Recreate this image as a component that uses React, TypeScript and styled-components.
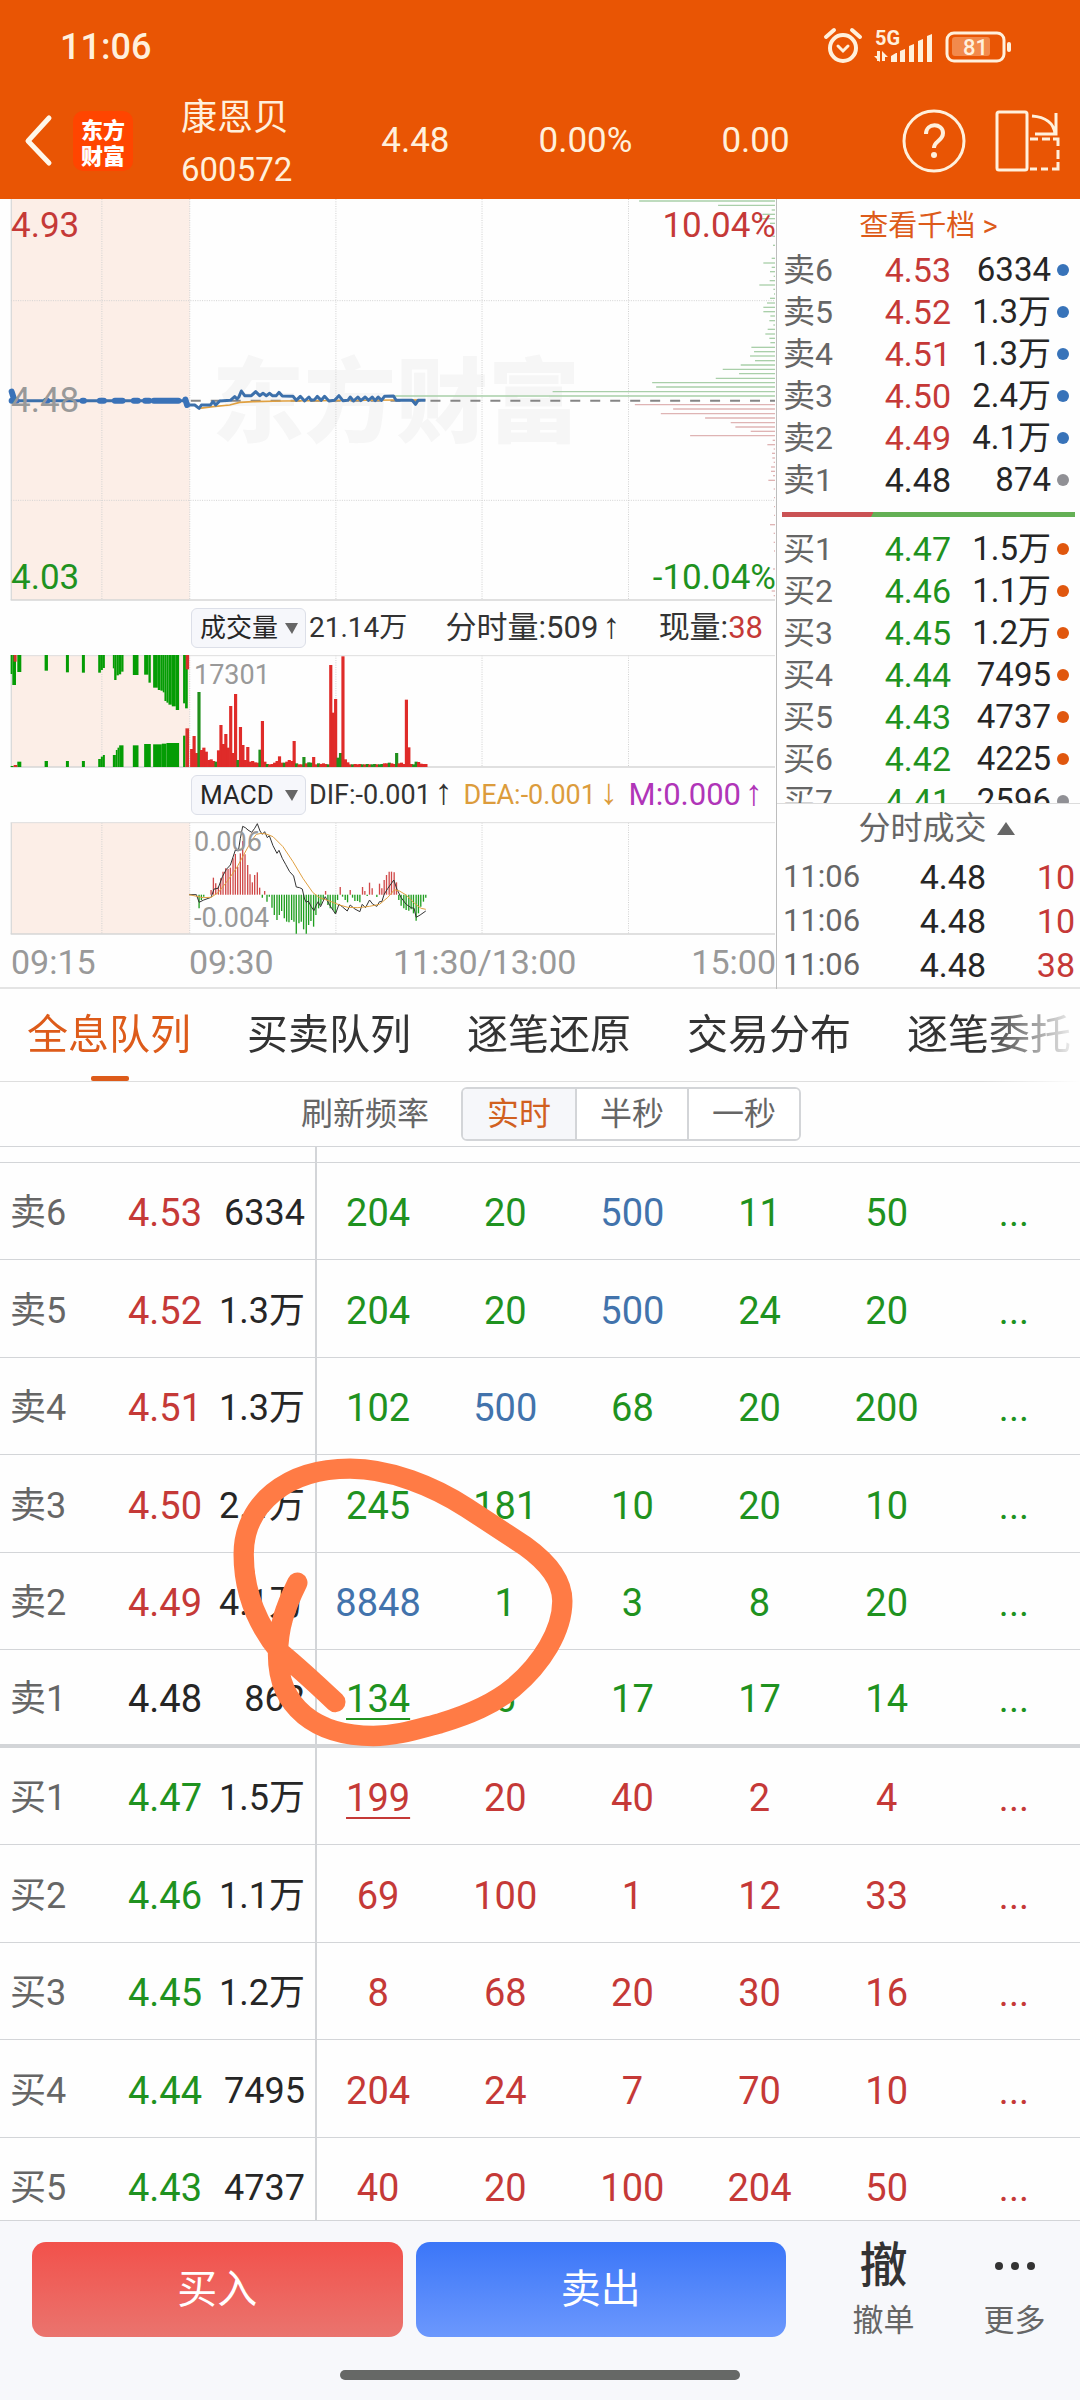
import React from 'react';
import styled, { createGlobalStyle } from 'styled-components';

const color = {
  brand: '#e95504',
  accent: '#dd5b1a',
  up: '#c53937',
  down: '#1f921f',
  big: '#4273ac',
  ink: '#262626',
  soft: '#666666',
  mute: '#999999',
  line: '#d3d5d8',
  cream: '#fff0dc',
};

const Global = createGlobalStyle`
  * { box-sizing: border-box; }
  body {
    margin: 0;
    background: #fff;
    color: ${color.ink};
    font-family: Roboto, 'Noto Sans CJK SC', sans-serif;
  }
  button, select, input {
    margin: 0;
    padding: 0;
    border: 0;
    background: none;
    color: inherit;
    font: inherit;
  }
`;

const Screen = styled.div`
  display: flex;
  flex-direction: column;
  height: 100vh;
  overflow: hidden;
  background: #fefefe;
`;

/* ---------- header ---------- */

const Header = styled.header`
  flex: none;
  background: ${color.brand};
  color: ${color.cream};
`;

const StatusBar = styled.div`
  display: flex;
  align-items: center;
  justify-content: space-between;
  height: 92px;
  padding: 2px 68px 0 60px;
`;

const Clock = styled.span`
  font-size: 36px;
  font-weight: 500;
  line-height: 40px;
`;

const NavBar = styled.nav`
  display: flex;
  align-items: center;
  height: 107px;
  padding: 0 20px 10px 24px;
`;

const IconButton = styled.button`
  display: flex;
  align-items: center;
`;

const Logo = styled.div`
  display: grid;
  place-content: center;
  width: 60px;
  height: 60px;
  margin: 0 48px 0 20px;
  border-radius: 10px;
  background: #ff4500;
  color: #fff;
  font-family: 'Noto Sans CJK SC', sans-serif;
  font-size: 22px;
  font-weight: 900;
  line-height: 26px;
`;

const Quote = styled.div`
  display: flex;
  align-items: center;
  gap: 89px;
  font-size: 35px;
`;

const Stock = styled.h1`
  display: flex;
  flex-direction: column;
  margin: 0;
  padding-top: 6px;
  font-size: 33px;
  font-weight: 400;
  line-height: 52px;
`;

const StockName = styled.span`
  font-size: 36px;
`;

const NavActions = styled.div`
  display: flex;
  gap: 28px;
  margin-left: auto;
`;

/* ---------- market panel ---------- */

const Market = styled.section`
  flex: none;
  display: grid;
  grid-template-columns: minmax(0, 1fr) 303px;
  height: 790px;
  border-bottom: 2px solid #e4e4e4;
`;

const Charts = styled.div`
  display: flex;
  flex-direction: column;
  border-right: 1px solid #bdbdbd;
`;

const ChartBox = styled.div<{ $h: number }>`
  position: relative;
  height: ${(p) => p.$h}px;
  svg {
    position: relative;
    display: block;
    width: 100%;
    height: 100%;
  }
`;

const Mark = styled.span<{ $tone: string; $size: number }>`
  position: absolute;
  color: ${(p) => p.$tone};
  font-size: ${(p) => p.$size}px;
  line-height: 40px;
`;

const TopLeft = styled(Mark)` left: 11px; top: 7px; `;
const MidLeft = styled(Mark)` left: 11px; top: 182px; `;
const LowLeft = styled(Mark)` left: 11px; bottom: 3px; `;
const TopRight = styled(Mark)` right: 0; top: 7px; `;
const LowRight = styled(Mark)` right: 0; bottom: 3px; `;
const InnerTop = styled(Mark)` left: 194px; top: 0; `;
const InnerLow = styled(Mark)` left: 194px; bottom: -3px; `;

const Watermark = styled.span`
  position: absolute;
  left: 212px;
  top: 136px;
  color: #f6f6f6;
  font-family: 'Noto Sans CJK SC', sans-serif;
  font-size: 92px;
  font-weight: 900;
  line-height: 120px;
`;

const Indicator = styled.div`
  display: flex;
  align-items: center;
  height: 54px;
  padding: 0 13px 0 191px;
  font-size: 30px;
`;

const Picker = styled.label`
  position: relative;
  flex: none;
  width: 115px;
  height: 40px;
  margin-right: 3px;
  border: 1px solid #dcdfe8;
  border-radius: 6px;
  background: #f6f7fb;
  select {
    appearance: none;
    width: 100%;
    height: 100%;
    padding-left: 8px;
    font-size: 26px;
    line-height: 38px;
  }
  svg {
    position: absolute;
    right: 7px;
    top: 14px;
    pointer-events: none;
  }
`;

const Readings = styled.div`
  flex: 1;
  display: flex;
  align-items: center;
  justify-content: space-between;
  color: #333;
  white-space: nowrap;
`;

const Reading = styled.span<{ $tone?: string; $size: number }>`
  color: ${(p) => p.$tone ?? 'inherit'};
  font-size: ${(p) => p.$size}px;
  line-height: 40px;
`;

const Arrow = styled.span`
  margin-left: 4px;
  font-family: 'Liberation Sans', sans-serif;
  font-size: 36px;
  line-height: 32px;
`;

const Red = styled.span`
  color: ${color.up};
`;

const TimeAxis = styled.div`
  display: grid;
  grid-template-columns: 178px 204px 1fr auto;
  padding-left: 11px;
  color: ${color.mute};
  font-size: 34px;
  line-height: 54px;
`;

/* ---------- order book ---------- */

const Book = styled.aside`
  display: flex;
  flex-direction: column;
  min-width: 0;
`;

const DepthLink = styled.a`
  display: block;
  height: 50px;
  color: ${color.accent};
  font-size: 29px;
  line-height: 54px;
  text-align: center;
  text-decoration: none;
`;

const Levels = styled.div`
  height: 555px;
  overflow: hidden;
  border-bottom: 1px solid #dcdcdc;
`;

const Level = styled.div`
  display: grid;
  grid-template-columns: 68px 100px 100px 1fr;
  align-items: center;
  height: 42px;
  padding-left: 6px;
  font-size: 33px;
  line-height: 42px;
  text-align: right;
`;

const LevelName = styled.span`
  color: ${color.soft};
  font-size: 32px;
  text-align: left;
`;

const Price = styled.span<{ $tone: string }>`
  color: ${(p) => p.$tone};
  font-size: 34px;
`;

const Dot = styled.i<{ $tone: string }>`
  width: 12px;
  height: 12px;
  margin-left: 6px;
  border-radius: 50%;
  background: ${(p) => p.$tone};
`;

const Balance = styled.div`
  display: flex;
  height: 5px;
  margin: 11px 5px 11px;
  background: linear-gradient(120deg, #ca5254 31%, #64b055 31%);
`;

const DealsTitle = styled.button`
  display: flex;
  align-items: center;
  justify-content: center;
  gap: 10px;
  height: 50px;
  padding: 0 0 2px 16px;
  color: ${color.soft};
  font-size: 32px;
  line-height: 48px;
`;

const Deal = styled.div`
  display: grid;
  grid-template-columns: 100px 103px 1fr;
  align-items: center;
  height: 44px;
  padding: 2px 5px 0 6px;
  font-size: 34px;
  line-height: 42px;
  text-align: right;
`;

const DealTime = styled.span`
  color: ${color.soft};
  font-size: 31px;
  text-align: left;
`;

/* ---------- tabs ---------- */

const Tabs = styled.div`
  flex: none;
  display: flex;
  height: 93px;
  overflow: hidden;
  border-bottom: 1px solid #dedede;
  mask-image: linear-gradient(90deg, #000 91%, transparent 100%);
`;

const Tab = styled.button<{ $on?: boolean }>`
  flex: none;
  position: relative;
  width: 220px;
  padding: 0 2px 0 0;
  color: ${(p) => (p.$on ? color.accent : '#333')};
  font-size: 41px;
  line-height: 60px;
  &::after {
    content: '';
    position: absolute;
    left: 50%;
    bottom: 0;
    width: 38px;
    height: 5px;
    margin-left: -19px;
    border-radius: 2px;
    background: ${(p) => (p.$on ? color.accent : 'transparent')};
  }
`;

const RateRow = styled.div`
  flex: none;
  display: flex;
  align-items: center;
  justify-content: center;
  gap: 32px;
  height: 65px;
  padding-left: 22px;
  border-bottom: 1px solid ${color.line};
  color: ${color.soft};
  font-size: 32px;
  line-height: 50px;
`;

const Segments = styled.div`
  display: flex;
  height: 54px;
  border: 2px solid ${color.line};
  border-radius: 6px;
  overflow: hidden;
`;

const Segment = styled.button<{ $on?: boolean }>`
  width: 112px;
  background: ${(p) => (p.$on ? '#f6f7fa' : '#fff')};
  color: ${(p) => (p.$on ? '#d1601f' : color.soft)};
  & + & {
    border-left: 2px solid ${color.line};
  }
`;

/* ---------- queue table ---------- */

const Queue = styled.section`
  position: relative;
  flex: 1;
  min-height: 0;
  overflow: hidden;
`;

const QueueTable = styled.table`
  width: 100%;
  border-collapse: separate;
  border-spacing: 0;
  table-layout: fixed;
  line-height: 44px;
`;

const Row = styled.tr<{ $heavy?: boolean }>`
  height: 97px;
  &:nth-child(even) { height: 98px; }
  td, th {
    padding: 4px 0 0;
    border-bottom: ${(p) => (p.$heavy ? 4 : 1)}px solid ${color.line};
  }
`;

const LeadRow = styled.tr`
  height: 16px;
  td {
    padding: 0;
    border-bottom: 1px solid ${color.line};
  }
`;

const NameCell = styled.th`
  color: ${color.soft};
  font-size: 36px;
  font-weight: 400;
  text-align: left;
  text-indent: 10px;
`;

const PriceCell = styled.td<{ $tone: string }>`
  color: ${(p) => p.$tone};
  font-size: 38px;
  text-align: right;
`;

const QtyCell = styled.td`
  font-size: 36px;
  text-align: right;
  && {
    padding-right: 10px;
    border-right: 2px solid ${color.line};
  }
`;

const OrderCell = styled.td<{ $tone: string }>`
  color: ${(p) => p.$tone};
  font-size: 38px;
  text-align: center;
  && {
    padding-right: 5px;
  }
`;

const Own = styled.span`
  text-decoration: underline;
  text-decoration-thickness: 2px;
  text-underline-offset: 6px;
`;

const Scribble = styled.svg`
  position: absolute;
  left: 200px;
  top: 274px;
  width: 400px;
  height: 340px;
  pointer-events: none;
`;

/* ---------- footer ---------- */

const Footer = styled.footer`
  flex: none;
  display: flex;
  flex-direction: column;
  align-items: center;
  justify-content: space-between;
  height: 180px;
  padding: 21px 0 20px;
  border-top: 1px solid ${color.line};
  background: #f7f8fb;
`;

const Actions = styled.div`
  display: grid;
  grid-template-columns: 1fr 131px 131px;
  width: 100%;
  padding-left: 32px;
`;

const Trades = styled.div`
  display: grid;
  grid-template-columns: 1fr 1fr;
  gap: 13px;
  padding-right: 32px;
`;

const TradeButton = styled.button<{ $from: string; $to: string }>`
  height: 95px;
  border-radius: 14px;
  background: linear-gradient(${(p) => p.$from}, ${(p) => p.$to});
  color: #fff;
  font-size: 40px;
  line-height: 60px;
`;

const Tool = styled.button`
  display: flex;
  flex-direction: column;
  align-items: center;
  color: ${color.soft};
  font-size: 31px;
  line-height: 62px;
`;

const ToolIcon = styled.span`
  display: flex;
  align-items: center;
  height: 48px;
  color: #333;
  font-size: 48px;
  font-weight: 500;
`;

const HomeBar = styled.div`
  width: 400px;
  height: 10px;
  border-radius: 5px;
  background: #666866;
`;

/* ---------- data ---------- */

const sells: [string, string, string, string][] = [
  ['卖6', '4.53', '6334', '#3873b9'],
  ['卖5', '4.52', '1.3万', '#3873b9'],
  ['卖4', '4.51', '1.3万', '#3873b9'],
  ['卖3', '4.50', '2.4万', '#3873b9'],
  ['卖2', '4.49', '4.1万', '#3873b9'],
  ['卖1', '4.48', '874', '#909095'],
];

const buys: [string, string, string, string][] = [
  ['买1', '4.47', '1.5万', '#e0570e'],
  ['买2', '4.46', '1.1万', '#e0570e'],
  ['买3', '4.45', '1.2万', '#e0570e'],
  ['买4', '4.44', '7495', '#e0570e'],
  ['买5', '4.43', '4737', '#e0570e'],
  ['买6', '4.42', '4225', '#e0570e'],
  ['买7', '4.41', '2596', '#909095'],
];

const deals = ['10', '10', '38'];

const queue: [string, string, string, string[]][] = [
  ['卖6', '4.53', '6334', ['204', '20', '500', '11', '50', '...']],
  ['卖5', '4.52', '1.3万', ['204', '20', '500', '24', '20', '...']],
  ['卖4', '4.51', '1.3万', ['102', '500', '68', '20', '200', '...']],
  ['卖3', '4.50', '2.4万', ['245', '181', '10', '20', '10', '...']],
  ['卖2', '4.49', '4.1万', ['8848', '1', '3', '8', '20', '...']],
  ['卖1', '4.48', '862', ['134', '6', '17', '17', '14', '...']],
  ['买1', '4.47', '1.5万', ['199', '20', '40', '2', '4', '...']],
  ['买2', '4.46', '1.1万', ['69', '100', '1', '12', '33', '...']],
  ['买3', '4.45', '1.2万', ['8', '68', '20', '30', '16', '...']],
  ['买4', '4.44', '7495', ['204', '24', '7', '70', '10', '...']],
  ['买5', '4.43', '4737', ['40', '20', '100', '204', '50', '...']],
];

const priceTone = (p: string) => (p === '4.48' ? color.ink : p > '4.48' ? color.up : color.down);

const orderTone = (name: string, v: string) => {
  if (Number(v) >= 500) return color.big;
  return name.startsWith('卖') ? color.down : color.up;
};

/* Depth bars: [y, left edge], drawn to the right border; chart units are thirds of a pixel. */
const askDepth = [
  [18, 780], [31, 1017], [45, 1178], [58, 1150], [71, 1140], [85, 1173], [124, 1180], [151, 1182], [190, 1178],
  [204, 1153], [217, 1178], [230, 1173], [244, 1184], [257, 1172], [270, 1141], [283, 1183], [297, 1185], [310, 1173],
  [324, 1164], [337, 1153], [350, 1153], [363, 1174], [377, 1171], [390, 1183], [403, 1166], [417, 1159], [430, 1171],
  [443, 1174], [457, 1117], [470, 1125], [483, 1113], [497, 1128], [510, 1085], [523, 1031], [536, 1080], [550, 1010],
  [563, 819], [576, 831], [590, 520], [603, 30],
];
const bidDepth = [
  [629, 767], [642, 882], [656, 845], [669, 978], [683, 1055], [696, 1069], [709, 1115], [722, 933], [736, 1181],
  [749, 1165], [762, 1184], [775, 1179], [789, 1180], [802, 1184], [816, 1176], [829, 1176], [842, 1182], [856, 1168],
  [882, 1184], [908, 1185], [935, 1185], [961, 1185], [989, 1173], [1015, 1184], [1042, 1184], [1068, 1185],
  [1122, 1182], [1188, 1178], [1202, 1184],
];

const priceLine =
  '35,586 37,600 42,617 558,617 562,630 585,630 598,640 605,630 632,630 640,620 648,630 660,618 692,616 705,605 712,612 718,605 725,588 735,602 755,602 768,590 780,602 790,595 800,602 810,595 818,602 830,602 838,592 848,603 880,604 890,616 902,604 915,618 928,606 935,616 945,614 953,604 965,616 975,604 988,618 1005,616 1018,602 1030,617 1045,616 1052,606 1062,618 1075,606 1084,617 1097,606 1107,616 1118,606 1127,617 1136,606 1146,616 1155,604 1182,603 1190,616 1238,616 1248,628 1256,616 1278,616';
const averageLine = '598,640 640,635 690,630 720,622 760,620 850,618 1190,615 1278,615';
const beads = [[35, 50], [138, 142], [248, 252], [300, 312], [345, 368], [402, 414], [436, 448], [462, 536]];

/* Call auction bars: [left, right, end]. */
const auctionTop = [
  [32, 37, 237], [37, 48, 270], [52, 64, 231], [134, 144, 227], [198, 207, 232], [246, 255, 233], [295, 303, 233],
  [303, 309, 225], [309, 315, 219], [339, 343, 220], [343, 350, 255], [350, 357, 241], [357, 364, 238], [364, 371, 230],
  [399, 416, 240], [433, 446, 239], [446, 453, 263], [460, 474, 278], [474, 482, 285], [482, 489, 287], [489, 494, 292],
  [494, 500, 318], [500, 506, 323], [506, 516, 329], [516, 528, 334], [528, 538, 345], [550, 556, 325], [556, 564, 340],
];
const auctionLow = [
  [32, 41, 513], [52, 64, 500], [134, 144, 498], [198, 207, 498], [246, 255, 498], [295, 303, 492], [303, 309, 485],
  [309, 315, 480], [339, 348, 480], [348, 353, 465], [353, 358, 458], [358, 371, 451], [399, 416, 451], [433, 453, 447],
  [460, 486, 448], [486, 500, 446], [500, 538, 444], [550, 557, 422],
];

/* Minute volumes: r or g, then the top of the bar. */
const volumes =
  'r462 r423 r474 g291 r465 r458 r470 r495 r493 r498 g500 r466 r390 r447 r417 r458 r333 r474 r297 g495 r396 r450 r495 r456 r500 r498 r502 r503 g464 r378 r500 g507 r508 r507 r503 r498 r484 r503 g503 r500 r495 r498 r438 g505 r508 r508 g486 r505 g502 g503 r486 r508 g505 r507 r505 r507 g508 r210 r353 r312 g488 g474 r184 r493 r502 r508 g508 r507 r508 r507 g508 r508 g507 r508 g508 g507 r508 g508 g507 r505 r505 g503 r505 r507 g474 r505 r503 r507 r314 r457 r507 g508 g500 r501 r506 r507 r507'.split(' ');

const macd: [number, number][] = [
  [598, 940], [605, 915], [612, 905], [634, 885], [641, 848], [648, 865], [656, 875], [663, 850], [670, 830], [678, 820],
  [685, 822], [692, 818], [700, 790], [707, 777], [714, 815], [722, 775], [729, 738], [736, 778], [744, 810], [751, 838],
  [758, 862], [765, 840], [773, 832], [780, 878], [788, 908], [795, 888], [802, 920], [809, 905], [817, 938], [824, 960],
  [832, 975], [839, 960], [846, 948], [854, 970], [861, 980], [868, 982], [876, 975], [883, 980], [890, 1016],
  [898, 985], [905, 980], [912, 1003], [920, 1016], [927, 990], [934, 978], [942, 995], [949, 960], [957, 940],
  [964, 930], [971, 915], [978, 888], [985, 930], [992, 940], [1000, 945], [1007, 955], [1014, 915], [1022, 876],
  [1029, 905], [1037, 915], [1044, 922], [1052, 885], [1059, 908], [1066, 918], [1074, 918], [1081, 922], [1089, 876],
  [1096, 888], [1103, 903], [1110, 863], [1118, 880], [1132, 906], [1140, 866], [1147, 880], [1154, 855], [1161, 840],
  [1169, 830], [1176, 830], [1184, 832], [1191, 862], [1198, 915], [1205, 932], [1213, 940], [1220, 945], [1228, 947],
  [1235, 943], [1242, 955], [1250, 977], [1257, 955], [1264, 935], [1272, 920], [1279, 908],
];
const difLine =
  '568,899 590,899 598,922 612,915 634,907 643,882 655,880 668,845 680,823 692,810 707,765 716,768 722,730 729,694 737,698 745,705 756,712 765,700 773,686 781,708 788,718 795,710 803,728 809,722 820,752 832,775 838,766 848,790 858,808 870,830 882,843 890,876 900,878 908,882 915,912 920,922 926,918 935,935 943,947 950,930 956,920 963,935 977,905 990,930 1008,957 1018,928 1028,935 1043,948 1052,930 1066,942 1081,950 1088,928 1098,938 1110,915 1120,928 1132,934 1140,920 1147,920 1154,898 1165,880 1183,855 1192,882 1205,908 1220,928 1235,938 1244,940 1250,967 1262,960 1279,948';
const deaLine =
  '568,899 610,908 634,907 655,893 680,862 710,820 740,765 757,735 770,718 785,715 800,717 820,725 850,755 880,800 910,850 940,893 960,908 990,918 1020,930 1045,937 1075,938 1110,934 1140,928 1165,907 1185,884 1200,888 1220,900 1245,925 1265,940 1279,943';

/* ---------- drawings ---------- */

const Session = ({ top, bottom }: { top: number; bottom: number }) => (
  <g>
    <rect x="33" y={top} width="537" height={bottom - top} fill="#fceee7" />
    <g stroke="#d2d2d2" strokeWidth="3" strokeDasharray="3 4">
      {[306, 570, 1009, 1448, 1888].map((x) => (
        <path key={x} d={`M${x} ${top}V${bottom}`} />
      ))}
    </g>
    <path d={`M34 ${top}V${bottom}`} stroke="#dadada" strokeWidth="4" />
    <path d={`M32 ${bottom}H2328`} stroke="#d6d6d6" strokeWidth="5" />
  </g>
);

const PriceChart = () => (
  <svg viewBox="0 12 2331 1206" preserveAspectRatio="none" fill="none" aria-label="分时走势">
    <Session top={12} bottom={1215} />
    <path d="M33 317H2328M33 916H2328" stroke="#d2d2d2" strokeWidth="3" strokeDasharray="3 4" />
    <g stroke="#a9cfa9" strokeWidth="4">
      {askDepth.map(([y, x]) => <path key={y} d={`M${x + 1140} ${y}H2328`} />)}
    </g>
    <g stroke="#dfb4b4" strokeWidth="4">
      {bidDepth.map(([y, x]) => <path key={y} d={`M${x + 1140} ${y}H2328`} />)}
    </g>
    <path d="M573 617H2328" stroke="#858585" strokeWidth="6" strokeDasharray="30 30" />
    <polyline points={averageLine} stroke="#e0a040" strokeWidth="5" />
    <polyline points={priceLine} stroke="#3c70ab" strokeWidth="9" strokeLinejoin="round" />
    <g stroke="#3a72b8" strokeWidth="18" strokeLinecap="round">
      {beads.map(([a, b]) => <path key={a} d={`M${a} 617H${b}`} />)}
      <path d="M35 590L42 612M557 614L562 630" />
    </g>
  </svg>
);

const VolumeChart = () => (
  <svg viewBox="0 180 2331 339" preserveAspectRatio="none" aria-label="成交量图">
    <Session top={181} bottom={516} />
    <path d="M32 182H2328" stroke="#dedede" strokeWidth="3" />
    <g fill="#049c04">
      {auctionTop.map(([a, b, y]) => <rect key={a} x={a} y="180" width={b - a} height={y - 180} />)}
      {auctionLow.map(([a, b, y]) => <rect key={a} x={a} y={y} width={b - a} height={516 - y} />)}
    </g>
    <g fill="#d8302c">
      <rect x="41" y="180" width="9" height="20" />
      <rect x="558" y="180" width="10" height="43" />
      <rect x="41" y="510" width="11" height="6" />
      <rect x="557" y="400" width="11" height="116" />
    </g>
    {volumes.map((v, i) => {
      const y = Number(v.slice(1));
      return (
        <rect key={i} x={571 + i * 7.33} y={y} width="9.5" height={516 - y} fill={v[0] === 'r' ? '#df2b29' : '#1f8f1c'} />
      );
    })}
  </svg>
);

const MacdChart = () => (
  <svg viewBox="0 681 2331 339" preserveAspectRatio="none" fill="none" aria-label="MACD图">
    <Session top={683} bottom={1017} />
    <path d="M32 683H2328" stroke="#dedede" strokeWidth="3" />
    {macd.map(([x, y]) => (
      <path key={x} d={`M${x} 899V${y}`} stroke={y < 899 ? '#d04a4a' : '#1f9e1f'} strokeWidth="4" />
    ))}
    <polyline points={difLine} stroke="#333" strokeWidth="3" />
    <polyline points={deaLine} stroke="#e0a040" strokeWidth="3" />
  </svg>
);

const StatusIcons = () => (
  <svg width="190" height="40" viewBox="822 28 190 40" fill="none" stroke={color.cream}>
    <circle cx="843" cy="49" r="13" strokeWidth="4" />
    <path d="M826 38l8-7M860 38l-8-7" strokeWidth="4" strokeLinecap="round" />
    <path d="M838 47l5 5 5-5" strokeWidth="3" strokeLinecap="round" />
    <text x="875" y="46" fill={color.cream} stroke="none" fontFamily="Roboto" fontSize="20" fontWeight="700">5G</text>
    <g fill={color.cream} stroke="none">
      <path d="M877 52v10h3V52zM874 57l6 6v-6zM882 62V52l6 6h-3v4z" />
      <path d="M891 62v-5l5-3h1v9h-6zM900 52l5-2v13h-5zM909 47l5-2v18h-5zM918 42l5-2v23h-5zM927 37l5-2v28h-5z" />
    </g>
    <rect x="947" y="34" width="57" height="28" rx="7" strokeWidth="3" />
    <rect x="952" y="38" width="38" height="19" rx="3" fill="#f28a4c" stroke="none" />
    <rect x="1007" y="43" width="4" height="10" rx="2" fill={color.cream} stroke="none" />
    <text x="963" y="56" fill={color.cream} stroke="none" fontFamily="Roboto" fontSize="22" fontWeight="500">81</text>
  </svg>
);

const BackIcon = () => (
  <svg width="29" height="54" viewBox="0 0 29 54" fill="none" stroke="#fff7ea" strokeWidth="5" strokeLinecap="round" strokeLinejoin="round">
    <path d="M25 4L4 27l21 22" />
  </svg>
);

const HelpIcon = () => (
  <svg width="64" height="64" viewBox="0 0 64 64" fill="none" stroke={color.cream} strokeWidth="3">
    <circle cx="32" cy="32" r="30" />
    <path d="M24 25c0-12 17-11 17-1 0 8-9 8-9 15" strokeWidth="4" />
    <circle cx="32" cy="46" r="3" fill={color.cream} stroke="none" />
  </svg>
);

const RotateIcon = () => (
  <svg width="66" height="64" viewBox="0 0 66 64" fill="none" stroke={color.cream} strokeWidth="3">
    <rect x="3" y="3" width="30" height="58" rx="2" />
    <path d="M38 7c13 1 22 7 23 18M62 4v21H41" />
    <path d="M36 30h8M48 30h8M59 30h5v7M64 41v9M64 53v7h-6M54 60h-7M43 60h-7" />
  </svg>
);

const Caret = () => (
  <svg width="13" height="11" viewBox="0 0 13 11"><path d="M0 0h13L7 11z" fill="#666" /></svg>
);

const LevelRow = ({ row: [name, price, qty, dot] }: { row: [string, string, string, string] }) => (
  <Level>
    <LevelName>{name}</LevelName>
    <Price $tone={priceTone(price)}>{price}</Price>
    <span>{qty}</span>
    <Dot $tone={dot} />
  </Level>
);

export default function App() {
  return (
    <Screen>
      <Global />
      <Header>
        <StatusBar>
          <Clock>11:06</Clock>
          <StatusIcons />
        </StatusBar>
        <NavBar>
          <IconButton aria-label="返回"><BackIcon /></IconButton>
          <Logo><span>东方</span><span>财富</span></Logo>
          <Quote>
            <Stock>
              <StockName>康恩贝</StockName>
              <span>600572</span>
            </Stock>
            <span>4.48</span>
            <span>0.00%</span>
            <span>0.00</span>
          </Quote>
          <NavActions>
            <IconButton aria-label="帮助"><HelpIcon /></IconButton>
            <IconButton aria-label="横屏"><RotateIcon /></IconButton>
          </NavActions>
        </NavBar>
      </Header>

      <Market>
        <Charts>
          <ChartBox $h={402}>
            <Watermark>东方财富</Watermark>
            <PriceChart />
            <TopLeft $tone={color.up} $size={35}>4.93</TopLeft>
            <MidLeft $tone={color.mute} $size={35}>4.48</MidLeft>
            <LowLeft $tone={color.down} $size={35}>4.03</LowLeft>
            <TopRight $tone={color.up} $size={35}>10.04%</TopRight>
            <LowRight $tone={color.down} $size={35}>-10.04%</LowRight>
          </ChartBox>
          <Indicator>
            <Picker>
              <select aria-label="指标一" defaultValue="成交量"><option>成交量</option></select>
              <Caret />
            </Picker>
            <Readings>
              <Reading $size={28}>21.14万</Reading>
              <Reading $size={31}>分时量:509<Arrow>↑</Arrow></Reading>
              <Reading $size={31}>现量:<Red>38</Red></Reading>
            </Readings>
          </Indicator>
          <ChartBox $h={113}>
            <VolumeChart />
            <InnerTop $tone={color.mute} $size={27}>17301</InnerTop>
          </ChartBox>
          <Indicator>
            <Picker>
              <select aria-label="指标二" defaultValue="MACD"><option>MACD</option></select>
              <Caret />
            </Picker>
            <Readings>
              <Reading $size={27}>DIF:-0.001<Arrow>↑</Arrow></Reading>
              <Reading $size={27} $tone="#dc9c3c">DEA:-0.001<Arrow>↓</Arrow></Reading>
              <Reading $size={31} $tone="#b035b8">M:0.000<Arrow>↑</Arrow></Reading>
            </Readings>
          </Indicator>
          <ChartBox $h={113}>
            <MacdChart />
            <InnerTop $tone={color.mute} $size={27}>0.006</InnerTop>
            <InnerLow $tone={color.mute} $size={27}>-0.004</InnerLow>
          </ChartBox>
          <TimeAxis>
            <span>09:15</span>
            <span>09:30</span>
            <span>11:30/13:00</span>
            <span>15:00</span>
          </TimeAxis>
        </Charts>

        <Book>
          <DepthLink href="#depth">查看千档 &gt;</DepthLink>
          <Levels>
            {sells.map((r) => <LevelRow key={r[0]} row={r} />)}
            <Balance />
            {buys.map((r) => <LevelRow key={r[0]} row={r} />)}
          </Levels>
          <DealsTitle>
            分时成交
            <svg width="18" height="13" viewBox="0 0 18 13"><path d="M9 0l9 13H0z" fill="#666" /></svg>
          </DealsTitle>
          {deals.map((d, i) => (
            <Deal key={i}>
              <DealTime>11:06</DealTime>
              <span>4.48</span>
              <Red>{d}</Red>
            </Deal>
          ))}
        </Book>
      </Market>

      <Tabs role="tablist">
        <Tab role="tab" $on>全息队列</Tab>
        <Tab role="tab">买卖队列</Tab>
        <Tab role="tab">逐笔还原</Tab>
        <Tab role="tab">交易分布</Tab>
        <Tab role="tab">逐笔委托</Tab>
      </Tabs>

      <RateRow>
        <span>刷新频率</span>
        <Segments>
          <Segment $on>实时</Segment>
          <Segment>半秒</Segment>
          <Segment>一秒</Segment>
        </Segments>
      </RateRow>

      <Queue>
        <QueueTable>
          <colgroup>
            <col style={{ width: 92 }} />
            <col style={{ width: 110 }} />
            <col style={{ width: 115 }} />
            <col span={6} />
          </colgroup>
          <thead>
            <LeadRow>
              <td colSpan={2} />
              <QtyCell />
              <td colSpan={6} />
            </LeadRow>
          </thead>
          <tbody>
            {queue.map(([name, price, qty, orders]) => (
              <Row key={name} $heavy={name === '卖1'}>
                <NameCell scope="row">{name}</NameCell>
                <PriceCell $tone={priceTone(price)}>{price}</PriceCell>
                <QtyCell>{qty}</QtyCell>
                {orders.map((v, i) => (
                  <OrderCell key={i} $tone={orderTone(name, v)}>
                    {i === 0 && name.endsWith('1') ? <Own>{v}</Own> : v}
                  </OrderCell>
                ))}
              </Row>
            ))}
          </tbody>
        </QueueTable>
        <Scribble viewBox="0 0 1200 1020" fill="none" stroke="#ff7b45" strokeWidth="61" strokeLinecap="round" strokeLinejoin="round" aria-hidden="true">
          <path d="M292 485C255 560 234 620 234 700C234 860 350 945 520 945C590 945 650 925 720 907C810 880 880 850 940 800C1025 728 1087 630 1087 540C1087 480 1045 425 975 375L800 260C700 195 570 143 450 143C260 143 131 250 131 400C131 520 175 615 240 694C290 735 350 790 406 843" />
        </Scribble>
      </Queue>

      <Footer>
        <Actions>
          <Trades>
            <TradeButton $from="#f2514b" $to="#ea746e">买入</TradeButton>
            <TradeButton $from="#3b76f8" $to="#6c98fd">卖出</TradeButton>
          </Trades>
          <Tool><ToolIcon>撤</ToolIcon>撤单</Tool>
          <Tool>
            <ToolIcon>
              <svg width="42" height="10" viewBox="0 0 42 10" fill="#333">
                <circle cx="5" cy="5" r="4" /><circle cx="21" cy="5" r="4" /><circle cx="37" cy="5" r="4" />
              </svg>
            </ToolIcon>
            更多
          </Tool>
        </Actions>
        <HomeBar />
      </Footer>
    </Screen>
  );
}
